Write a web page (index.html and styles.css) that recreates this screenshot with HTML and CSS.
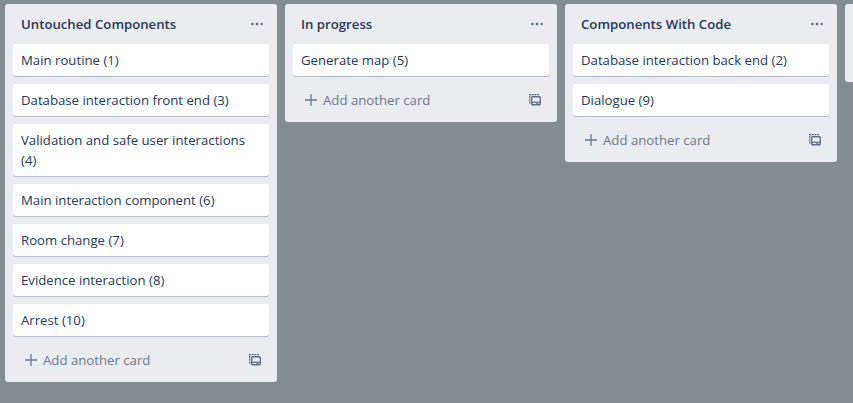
FILE: index.html
```
<!DOCTYPE html>
<html lang="en">
<head>
<meta charset="utf-8">
<title>Board</title>
<link rel="stylesheet" href="styles.css">
</head>
<body>
<svg class="defs" aria-hidden="true">
<symbol id="plus" viewBox="0 0 12 12"><path d="M6 0v12M0 6h12" stroke="currentColor" stroke-width="1.3" fill="none"/></symbol>
<symbol id="template" viewBox="0 0 12 12"><path d="M.7 9.5V.7H10" fill="none" stroke="currentColor" stroke-width="1.3" stroke-dasharray="2 .7"/><rect x="2.7" y="2.7" width="8.6" height="8" rx="1" fill="none" stroke="currentColor" stroke-width="1.4"/><path d="M3 8.3h8" stroke="currentColor" stroke-width="1.2"/><path d="M7.3 9.4h2" stroke="currentColor"/></symbol>
<symbol id="dots" viewBox="0 0 12 4"><circle cx="1.4" cy="2" r="1.3"/><circle cx="6" cy="2" r="1.3"/><circle cx="10.6" cy="2" r="1.3"/></symbol>
</svg>
<main class="board">
<section class="list">
<header><h2>Untouched Components</h2><svg class="dots"><use href="#dots"/></svg></header>
<div class="card">Main routine (1)</div>
<div class="card">Database interaction front end (3)</div>
<div class="card">Validation and safe user interactions (4)</div>
<div class="card">Main interaction component (6)</div>
<div class="card">Room change (7)</div>
<div class="card">Evidence interaction (8)</div>
<div class="card">Arrest (10)</div>
<footer><svg class="plus"><use href="#plus"/></svg><span>Add another card</span><svg class="template"><use href="#template"/></svg></footer>
</section>
<section class="list">
<header><h2>In progress</h2><svg class="dots"><use href="#dots"/></svg></header>
<div class="card">Generate map (5)</div>
<footer><svg class="plus"><use href="#plus"/></svg><span>Add another card</span><svg class="template"><use href="#template"/></svg></footer>
</section>
<section class="list">
<header><h2>Components With Code</h2><svg class="dots"><use href="#dots"/></svg></header>
<div class="card">Database interaction back end (2)</div>
<div class="card">Dialogue (9)</div>
<footer><svg class="plus"><use href="#plus"/></svg><span>Add another card</span><svg class="template"><use href="#template"/></svg></footer>
</section>
<section class="list next"></section>
</main>
</body>
</html>
```
FILE: styles.css
```
* { box-sizing: border-box; }
body { margin: 0; height: 403px; overflow: hidden; background: #838c91; font: 400 13.2px/20px "Open Sans", "Noto Sans", sans-serif; color: #253858; }
.defs { display: none; }
.board { display: flex; align-items: flex-start; gap: 8px; padding: 4px 0 0 5px; height: 403px; overflow: hidden; }
.list { flex: 0 0 272px; background: #ebecf0; border-radius: 3px; padding: 0 8px; }
.list.next { flex: 1 1 0; min-width: 0; padding: 0; height: 78px; border-radius: 3px 0 0 3px; }
header { height: 40px; display: flex; align-items: center; justify-content: space-between; padding: 0 6px 0 8px; }
h2 { margin: 0; font-size: 13.2px; font-weight: 600; }
.dots { width: 12px; height: 4px; fill: #5e6c84; }
.card { background: #fff; border-radius: 3px; box-shadow: 0 1px 0 #091e4240; padding: 6px 8px; margin-bottom: 8px; min-height: 32px; }
footer { height: 38px; display: flex; align-items: flex-start; padding: 6px 8px 0 12px; color: #6b778c; }
.plus { width: 12px; height: 12px; margin: 4px 6px 0 0; }
.template { width: 12px; height: 12px; margin: 4px 0 0 auto; color: #5e6c84; }
```
